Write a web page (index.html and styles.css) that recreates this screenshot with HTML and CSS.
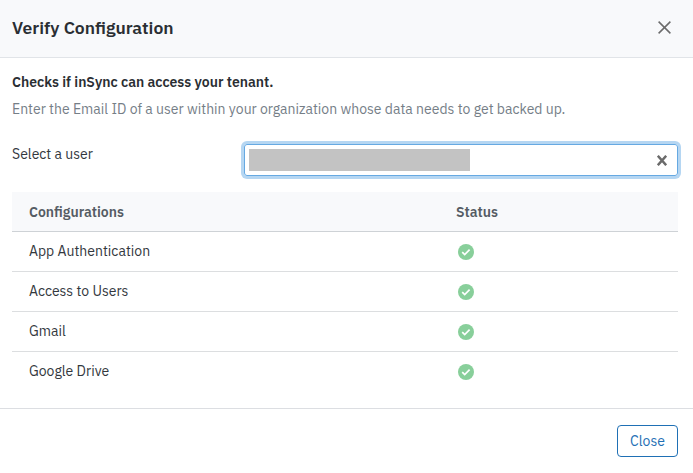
FILE: index.html
```
<!DOCTYPE html>
<html lang="en">
<head>
    <meta charset="UTF-8">
    <meta name="viewport" content="width=device-width, initial-scale=1.0">
    <title>Verify Configuration</title>
    <link rel="stylesheet" href="styles.css">
</head>
<body>
    <svg class="defs">
        <symbol id="check" viewBox="0 0 16 16">
            <circle cx="8" cy="8" r="8" fill="#88cf9a"/>
            <path d="M4.2 8.2 L6.7 10.6 L11.6 5.7" fill="none" stroke="#fff" stroke-width="1.7"/>
        </symbol>
    </svg>
    <div class="modal">
        <div class="modal-header">
            <h4 class="modal-title">Verify Configuration</h4>
            <button class="close" aria-label="Close dialog">
                <svg width="13" height="13" viewBox="0 0 13 13"><path d="M0.6 0.6 L12.4 12.4 M12.4 0.6 L0.6 12.4" stroke="#6b6b6b" stroke-width="1.5"/></svg>
            </button>
        </div>
        <div class="modal-body">
            <p class="heading">Checks if inSync can access your tenant.</p>
            <p class="hint">Enter the Email ID of a user within your organization whose data needs to get backed up.</p>
            <div class="form-row">
                <label class="label">Select a user</label>
                <div class="select">
                    <span class="value"></span>
                    <svg class="clear" width="10" height="11" viewBox="0 0 10 11"><path d="M0.8 0.8 L9.2 10.2 M9.2 0.8 L0.8 10.2" stroke="#6b6b6b" stroke-width="2.5"/></svg>
                </div>
            </div>
            <table class="config">
                <thead>
                    <tr><th class="name">Configurations</th><th>Status</th></tr>
                </thead>
                <tbody>
                    <tr><td>App Authentication</td><td><svg class="check"><use href="#check"/></svg></td></tr>
                    <tr><td>Access to Users</td><td><svg class="check"><use href="#check"/></svg></td></tr>
                    <tr><td>Gmail</td><td><svg class="check"><use href="#check"/></svg></td></tr>
                    <tr><td>Google Drive</td><td><svg class="check"><use href="#check"/></svg></td></tr>
                </tbody>
            </table>
        </div>
        <div class="modal-footer">
            <button class="btn">Close</button>
        </div>
    </div>
</body>
</html>
```
FILE: styles.css
```
*{
    box-sizing: border-box;
    margin: 0;
    padding: 0;
}
body{
    background: #fff;
    color: #33383e;
    font-family: "IBM Plex Sans", Roboto, "Liberation Sans", sans-serif;
    font-size: 14px;
    line-height: 20px;
}
.defs{
    display: none;
}
.modal{
    width: 693px;
    height: 473px;
    display: flex;
    flex-direction: column;
    overflow: hidden;
}
.modal-header{
    display: flex;
    align-items: center;
    justify-content: space-between;
    height: 58px;
    padding: 0 22px 2px 12px;
    background: #f8f9fb;
    border-bottom: 1px solid #e1e4e8;
}
.modal-title{
    font-size: 17.5px;
    font-weight: 600;
    line-height: 24px;
    color: #2a2e33;
}
.close{
    display: flex;
    border: 0;
    background: none;
}
.modal-body{
    height: 350px;
    padding: 14px 15px 0 12px;
}
.heading{
    font-weight: 600;
    color: #2a2e33;
}
.hint{
    margin-top: 7px;
    color: #757e87;
}
.form-row{
    display: flex;
    justify-content: space-between;
    margin-top: 25px;
}
.label{
    line-height: 21px;
}
.select{
    display: flex;
    align-items: center;
    justify-content: space-between;
    width: 434px;
    height: 32px;
    padding: 0 10px 0 4px;
    border: 1px solid #66a9e2;
    border-radius: 3px;
    box-shadow: 0 0 0 3px #b5d6f2;
}
.value{
    width: 221px;
    height: 22px;
    background: #c3c3c3;
}
.config{
    width: 666px;
    margin-top: 16px;
    border-collapse: separate;
    border-spacing: 0;
    table-layout: fixed;
}
.config th,
.config td{
    height: 40px;
    padding: 0 17px;
    text-align: left;
    vertical-align: middle;
    border-bottom: 1px solid #dcdee0;
}
.config td:first-child{
    padding-bottom: 2px;
}
.config th{
    background: #f8f9fb;
    color: #555c64;
    font-weight: 600;
}
.config tbody tr:last-child td{
    border-bottom: 0;
}
.config thead th{
    border-bottom-color: #ced2d6;
}
.config .name{
    width: 427px;
}
.check{
    display: block;
    width: 16px;
    height: 16px;
    margin-left: 2px;
}
.modal-footer{
    display: flex;
    justify-content: flex-end;
    height: 65px;
    padding: 16px 15px 0;
    border-top: 1px solid #dcdee2;
}
.btn{
    width: 61px;
    height: 32px;
    border: 1px solid #1f70b5;
    border-radius: 4px;
    background: #fff;
    color: #1f70b5;
    font: inherit;
}
```
